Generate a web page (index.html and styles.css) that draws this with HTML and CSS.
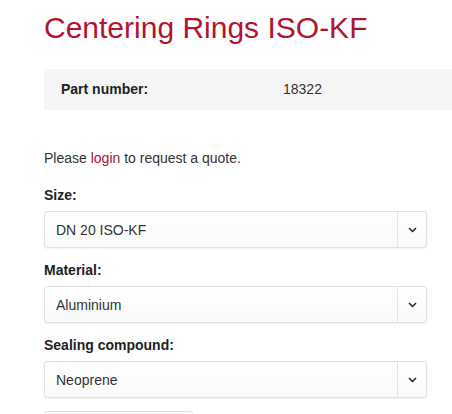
FILE: index.html
```html
<!DOCTYPE html>
<html lang="en">
<head>
<meta charset="utf-8">
<title>Centering Rings ISO-KF</title>
<link rel="stylesheet" href="styles.css">
</head>
<body>
<div class="page">
  <h1 class="title">Centering Rings ISO-KF</h1>
  <div class="part">
    <span class="part-label">Part number:</span>
    <span class="part-value">18322</span>
  </div>
  <p class="notice">Please <a class="link" href="#">login</a> to request a quote.</p>

  <div class="field">
    <div class="label">Size:</div>
    <div class="select">
      <span class="select-text">DN 20 ISO-KF</span>
      <span class="select-arrow"><svg width="9" height="6" viewBox="0 0 9 6"><path d="M1 1 L4.5 4.5 L8 1" fill="none" stroke="#222" stroke-width="1.5"/></svg></span>
    </div>
  </div>

  <div class="field">
    <div class="label">Material:</div>
    <div class="select">
      <span class="select-text">Aluminium</span>
      <span class="select-arrow"><svg width="9" height="6" viewBox="0 0 9 6"><path d="M1 1 L4.5 4.5 L8 1" fill="none" stroke="#222" stroke-width="1.5"/></svg></span>
    </div>
  </div>

  <div class="field">
    <div class="label">Sealing compound:</div>
    <div class="select">
      <span class="select-text">Neoprene</span>
      <span class="select-arrow"><svg width="9" height="6" viewBox="0 0 9 6"><path d="M1 1 L4.5 4.5 L8 1" fill="none" stroke="#222" stroke-width="1.5"/></svg></span>
    </div>
  </div>

  <div class="button"></div>
</div>
</body>
</html>
```

FILE: styles.css
```css
html, body {
  margin: 0;
  padding: 0;
  background: #fff;
  overflow: hidden;
}
body {
  font-family: "Liberation Sans", Arial, sans-serif;
  font-size: 14px;
  line-height: 20px;
  color: #333;
}
.page {
  padding: 11px 0 0 44px;
  width: 440px;
}
.title {
  margin: 0;
  font-size: 30px;
  line-height: 33px;
  font-weight: normal;
  color: #b1142e;
}
.part {
  margin-top: 25px;
  background: #f5f5f5;
  padding: 10px 17px 11px;
  display: grid;
  grid-template-columns: 222px auto;
}
.part-label {
  font-weight: bold;
  color: #222;
}
.part-value {
  color: #333;
}
.notice {
  margin: 38px 0 0;
}
.link {
  color: #a3153c;
  text-decoration: none;
}
.field {
  width: 383px;
}
.notice + .field {
  margin-top: 17px;
}
.field + .field {
  margin-top: 12px;
}
.label {
  font-weight: bold;
  color: #222;
  margin-bottom: 6px;
}
.select {
  display: flex;
  height: 37px;
  box-sizing: border-box;
  border: 1px solid #e1e1e1;
  border-radius: 3px;
  background: linear-gradient(#ffffff, #fafafa);
  box-shadow: 0 1px 2px rgba(0, 0, 0, 0.06);
}
.select-text {
  flex: 1;
  display: flex;
  align-items: center;
  padding-left: 11px;
  color: #333;
}
.select-arrow {
  width: 28px;
  border-left: 1px solid #e4e4e4;
  display: flex;
  align-items: center;
  justify-content: center;
}
.button {
  margin-top: 13px;
  width: 149px;
  height: 30px;
  box-sizing: border-box;
  border: 1px solid #e1e1e1;
  border-radius: 3px;
}
```
